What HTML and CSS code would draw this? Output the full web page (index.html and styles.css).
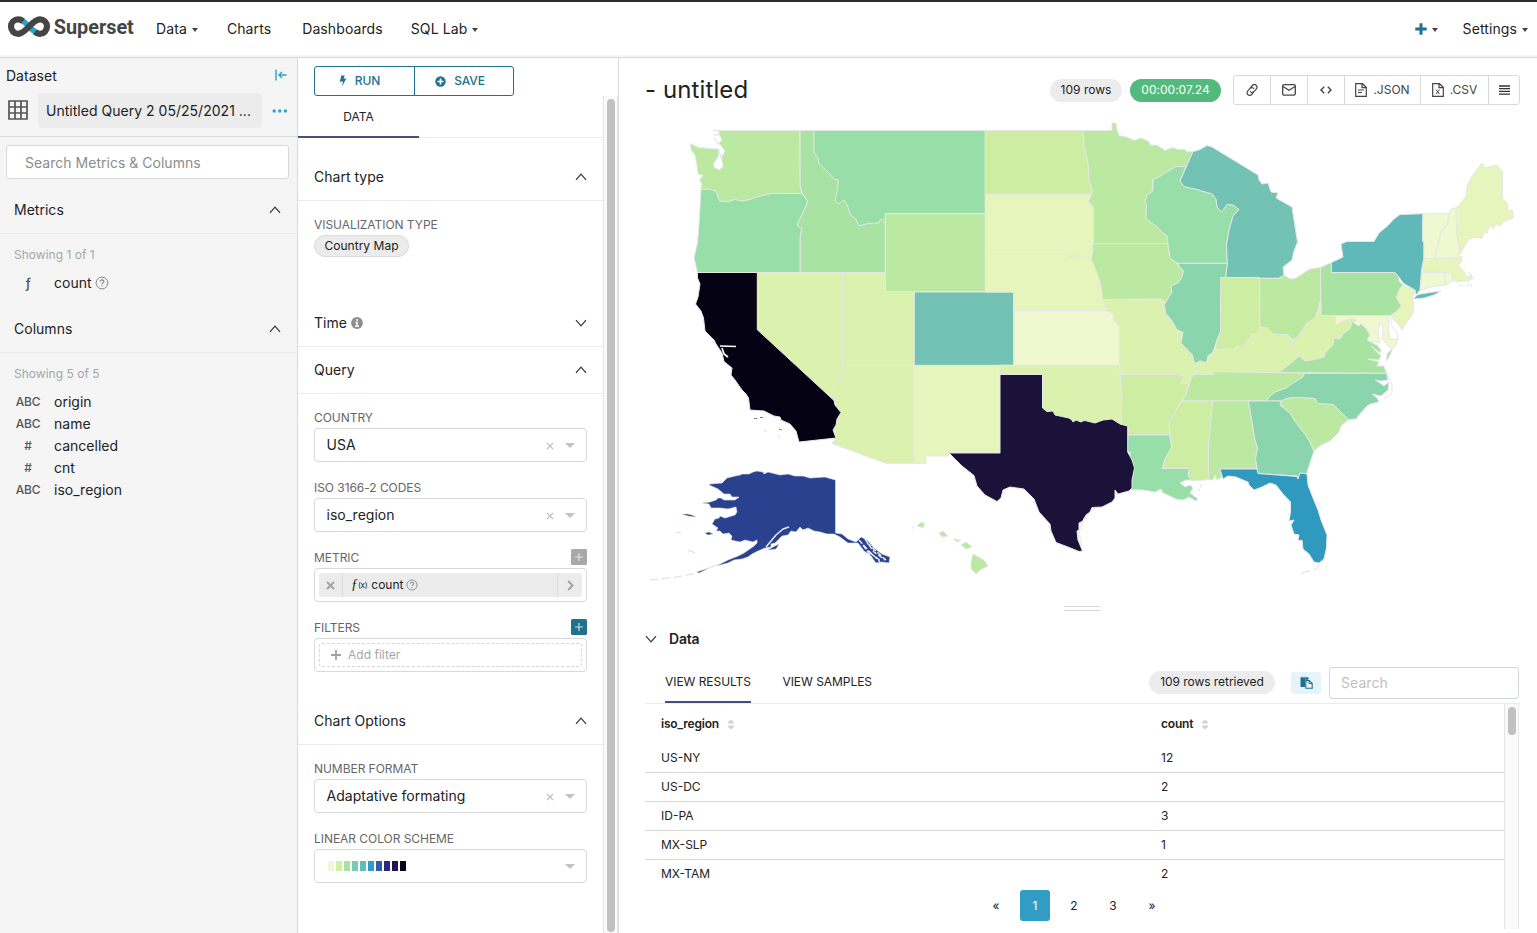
FILE: index.html
```html
<!DOCTYPE html>
<html lang="en">
<head>
<meta charset="utf-8">
<title>Superset</title>
<link rel="stylesheet" href="styles.css">
</head>
<body>
<svg class="defs" width="0" height="0">
  <symbol id="up" viewBox="0 0 12 8"><path d="M1 6.800 6 1.200l5 5.600" fill="none" stroke="#333" stroke-width="1.200"/></symbol>
  <symbol id="down" viewBox="0 0 12 8"><path d="M1 1.200 6 6.800l5-5.600" fill="none" stroke="#333" stroke-width="1.200"/></symbol>
  <symbol id="help" viewBox="0 0 14 14"><circle cx="7" cy="7" r="5.900" fill="none" stroke="#888" stroke-width="1"/><path d="M5.200 5.600c0-2.400 3.700-2.300 3.700-.1C8.900 6.900 7 6.800 7 8.300M7 9.300v1.200" fill="none" stroke="#888" stroke-width="1.200"/></symbol>
  <symbol id="clear" viewBox="0 0 8 8"><path d="m1 1 6 6M7 1 1 7" stroke="#bfbfbf" stroke-width="1.100"/></symbol>
  <symbol id="sort" viewBox="0 0 8 11"><path d="M.8 4.500Q1 2 4 .8 7 2 7.200 4.500zM.8 6.500Q1 9 4 10.200 7 9 7.200 6.500z" fill="#d2d2d2"/></symbol>
</svg>

<header class="nav">
  <svg class="logo" viewBox="0 0 128 26" width="128" height="26">
    <path d="M14.500 4.300C19.500 6.500 24 14 30 17" fill="none" stroke="#20a7c9" stroke-width="5.600"/>
    <path d="M16 5.200C14.300 3.900 12.800 3.400 11.200 3.400a7.200 7.200 0 0 0 0 14.400C19 17.800 25 3.400 32.800 3.400a7.200 7.200 0 0 1 0 14.400c-1.700 0-3.200-.5-4.800-1.700" fill="none" stroke="#454545" stroke-width="6.200"/>
    <text x="46.800" y="17.800" class="wordmark" textLength="80" lengthAdjust="spacingAndGlyphs">Superset</text>
  </svg>
  <nav class="menu">
    <a class="item data">Data<i class="caret"></i></a>
    <a class="item charts">Charts</a>
    <a class="item dash">Dashboards</a>
    <a class="item">SQL Lab<i class="caret"></i></a>
  </nav>
  <div class="menu-right">
    <a class="item new"><svg width="12" height="12" viewBox="0 0 12 12"><path d="M6 .3v11.400M.3 6h11.400" stroke="#20718d" stroke-width="3"/></svg><i class="caret"></i></a>
    <a class="item">Settings<i class="caret"></i></a>
  </div>
</header>

<div class="app">
  <aside class="dataset">
    <div class="ds-title"><span>Dataset</span><svg width="12" height="12" viewBox="0 0 12 12"><path d="M1 .5v11M11.500 6H4M7 3 4 6l3 3" fill="none" stroke="#20a7c9" stroke-width="1.400"/></svg></div>
    <div class="ds-query">
      <svg width="20" height="20" viewBox="0 0 20 20"><path d="M1 1h18v18H1zM7 1v18M13 1v18M1 7h18M1 13h18" fill="none" stroke="#555" stroke-width="1.700"/></svg>
      <div class="ds-name">Untitled Query 2 05/25/2021 ...</div>
      <svg class="more" width="16" height="4" viewBox="0 0 16 4"><g fill="#20a7c9"><circle cx="2.200" cy="2" r="1.700"/><circle cx="7.800" cy="2" r="1.700"/><circle cx="13.400" cy="2" r="1.700"/></g></svg>
    </div>
    <div class="ds-search">Search Metrics &amp; Columns</div>
    <div class="ds-head"><span>Metrics</span><svg width="12" height="8"><use href="#up"/></svg></div>
    <div class="showing">Showing 1 of 1</div>
    <div class="field"><b class="fn">ƒ</b><span>count</span><svg class="q" width="14" height="14"><use href="#help"/></svg></div>
    <div class="ds-head columns"><span>Columns</span><svg width="12" height="8"><use href="#up"/></svg></div>
    <div class="showing">Showing 5 of 5</div>
    <div class="field"><b>ABC</b><span>origin</span></div>
    <div class="field"><b>ABC</b><span>name</span></div>
    <div class="field"><b>#</b><span>cancelled</span></div>
    <div class="field"><b>#</b><span>cnt</span></div>
    <div class="field"><b>ABC</b><span>iso_region</span></div>
  </aside>

  <section class="controls">
    <div class="actions">
      <div class="btn"><svg width="8" height="12" viewBox="0 0 8 12"><path d="M2.300.5h3.400L4.600 3.800 7.300 3.200 3 11.700l1-5.400L.8 7z" fill="#20718d"/></svg>RUN</div>
      <div class="btn save"><svg width="11" height="11" viewBox="0 0 11 11"><circle cx="5.500" cy="5.500" r="5.200" fill="#20718d"/><path d="M5.500 2.500v6M2.500 5.500h6" stroke="#fff" stroke-width="1.700"/></svg>SAVE</div>
    </div>
    <div class="scroller">
      <div class="form">
        <div class="tabs"><div class="tab">DATA</div></div>
        <div class="sec"><span>Chart type</span><svg width="12" height="8"><use href="#up"/></svg></div>
        <div class="group viz">
          <div class="label">VISUALIZATION TYPE</div>
          <div class="chip">Country Map</div>
        </div>
        <div class="sec"><span>Time</span><svg class="info" width="12" height="12" viewBox="0 0 12 12"><circle cx="6" cy="6" r="5.900" fill="#8e8e8e"/><path d="M6 2v1.900M4.500 5.500H6v3.700M4.200 9.200h3.700" fill="none" stroke="#fff" stroke-width="1.500"/></svg><svg width="12" height="8"><use href="#down"/></svg></div>
        <div class="sec"><span>Query</span><svg width="12" height="8"><use href="#up"/></svg></div>
        <div class="group query">
          <div class="label">COUNTRY</div>
          <div class="select"><span>USA</span><svg width="8" height="8"><use href="#clear"/></svg><i class="tri"></i></div>
          <div class="label">ISO 3166-2 CODES</div>
          <div class="select"><span>iso_region</span><svg width="8" height="8"><use href="#clear"/></svg><i class="tri"></i></div>
          <div class="label">METRIC<svg class="add" width="16" height="16" viewBox="0 0 16 16"><rect width="16" height="16" rx="1.500" fill="#a8a8a8"/><path d="M8 4v8M4 8h8" stroke="#e4e4e4" stroke-width="1.200"/></svg></div>
          <div class="box"><div class="metric">
            <div class="m-x"><svg width="9" height="9" viewBox="0 0 9 9"><path d="m1 1 7 7M8 1 1 8" stroke="#a3a3a3" stroke-width="2"/></svg></div>
            <div class="m-name"><em>ƒ</em><small>(x)</small><span>count</span><svg width="12" height="12"><use href="#help"/></svg></div>
            <div class="m-go"><svg width="7" height="11" viewBox="0 0 7 11"><path d="m1.200 1 4.300 4.500L1.200 10" fill="none" stroke="#a3a3a3" stroke-width="2"/></svg></div>
          </div></div>
          <div class="label">FILTERS<svg class="add" width="16" height="16" viewBox="0 0 16 16"><rect width="16" height="16" rx="1.500" fill="#20718d"/><path d="M8 4v8M4 8h8" stroke="#c8dde4" stroke-width="1.200"/></svg></div>
          <div class="box"><div class="add-filter"><svg width="10" height="10" viewBox="0 0 10 10"><path d="M5 0v10M0 5h10" stroke="#a3a3a3" stroke-width="1.800"/></svg>Add filter</div></div>
        </div>
        <div class="sec"><span>Chart Options</span><svg width="12" height="8"><use href="#up"/></svg></div>
        <div class="group">
          <div class="label">NUMBER FORMAT</div>
          <div class="select"><span>Adaptative formating</span><svg width="8" height="8"><use href="#clear"/></svg><i class="tri"></i></div>
          <div class="label">LINEAR COLOR SCHEME</div>
          <div class="select"><div class="ramp"><i class="r0"></i><i class="r1"></i><i class="r2"></i><i class="r3"></i><i class="r4"></i><i class="r5"></i><i class="r6"></i><i class="r7"></i><i class="r8"></i><i class="r9"></i></div><i class="tri"></i></div>
        </div>
      </div>
      <div class="track"><div class="thumb"></div></div>
    </div>
  </section>

  <main class="chart">
    <div class="chart-head">
      <h1>- untitled</h1>
      <div class="badge">109 rows</div>
      <div class="badge timer">00:00:07.24</div>
      <div class="tools">
        <div class="t w37"><svg width="14" height="14" viewBox="0 0 14 14"><g transform="rotate(-50 7 7)" fill="none" stroke="#444" stroke-width="1.200"><path d="M6.500 9.600H3.300a2.600 2.600 0 0 1 0-5.200h3.400a2.600 2.600 0 0 1 2.500 3.300"/><path d="M7.500 4.400h3.200a2.600 2.600 0 0 1 0 5.200H7.300a2.600 2.600 0 0 1-2.500-3.300"/></g></svg></div>
        <div class="t w37"><svg width="14" height="12" viewBox="0 0 14 12"><rect x=".7" y=".7" width="12.600" height="10.400" rx="1.300" fill="none" stroke="#444" stroke-width="1.300"/><path d="m1 2.500 6 3.700 6-3.700" fill="none" stroke="#444" stroke-width="1.300"/></svg></div>
        <div class="t w37"><svg width="12" height="8" viewBox="0 0 12 8"><path d="M4.200.8 1 4l3.200 3.200M7.800.8 11 4 7.800 7.200" fill="none" stroke="#444" stroke-width="1.400"/></svg></div>
        <div class="t w76"><svg width="12" height="14" viewBox="0 0 12 14"><path d="M.7.700h6.800l3.800 3.600v9H.7zM7 .7v4h4" fill="none" stroke="#444" stroke-width="1.200"/><path d="M3 7h6M3 9.500h4" stroke="#444"/></svg>.JSON</div>
        <div class="t w68"><svg width="12" height="14" viewBox="0 0 12 14"><path d="M.7.700h6.800l3.800 3.600v9H.7zM7 .7v4h4" fill="none" stroke="#444" stroke-width="1.200"/><path d="m4 6.500 3.500 4.500M7.500 6.500 4 11" stroke="#444"/></svg>.CSV</div>
        <div class="t"><svg width="11" height="10" viewBox="0 0 11 10"><path d="M0 1h11M0 3.700h11M0 6.400h11M0 9.100h11" stroke="#333" stroke-width="1.300"/></svg></div>
      </div>
    </div>

    <svg class="map" width="875" height="475" viewBox="645 115 875 475">
      <g stroke="#e6e6e6" stroke-width="1" stroke-linejoin="round">
        <path fill="#a9e3a3" d="M800 130.500H840L860 215 885.300 213V272.500H800V238L801.500 229 797 225 806 206 807.500 201 802 193.500 800 186Z"/>
        <path fill="#bce9a2" d="M718.500 130.500H799.700L800 186 802 193.500H771L758 196.700 748 200 741.700 201 735 199.500 728 202 719.500 201 716 191.700 713 190 708 189 700.700 189.700 702 184 699.500 180 703 175 698 174 697 165 695 155 691 150 690.500 143.700 698.500 147.500 711.700 148.700 719 149 718.500 156.500 713.500 163.500 714 167.500 719.500 170 723 166.500 721.500 158 725 151 721.700 146.700 719 143 722 140 720 136Z"/>
        <path fill="none" stroke-width="1.300" d="M713 138 717 141M714 135 720 134M716 140 719 145M713 130.500H719M719 151 722 160"/>
        <path fill="#98dea8" d="M701 189.700 708 189 713 190 716 191.700 719.500 201 728 202 735 199.500 741.700 201 748 200 758 196.700 771 193.500H802L807.500 201 806 206 797 225 801.500 229 800 238V272.500H697.500L696 266 694 258 697.500 243 699 225Z"/>
        <path fill="#98dea8" d="M814 130.500H985.300V213.700H885.300V224L882 219 880 220 879 223 868 223.500 859 226 856 219 851 216 848 207 844 200 839 204 835 201 837 193 838.500 180 834 179 828 172 819 164 818 158 814 152Z"/>
        <path fill="#bce9a2" d="M885.300 213.700h100v78h-100z"/>
        <path fill="#dbf1ae" d="M842.300 365.300H914V463.300H885.700L832 443.500 836 438 833 430 840 412 834 400 833 384Z"/>
        <path fill="#dbf1ae" d="M757.300 272.500H842.300V380L840 383 836 380 833 384 834.500 400.500 757.300 329.700Z"/>
        <path fill="#dbf1ae" d="M842.300 272.500H885.300V291.700H914V365.300H842.300Z"/>
        <path fill="#050213" d="M697.500 272.500H757.300V329.700L834 400.500 835 405 841 412.500 837 419 836 425 833 430 836 438 799 442 796 431 790 424 781 420 780 417 774 416 770 414 764 411 750 410 748.500 398 746 394 742 390 735 380 731 375 732 368 724 361.500 722 353 716 344 714 340 705 331 703.500 318 701 311 695.500 304 698 297 700 284 697.500 278Z"/>
        <path fill="#e5f5bc" d="M914 365.300H1000V452.500H949V456H926V463.300H914Z"/>
        <path fill="#73c3b4" d="M914.300 292h99.400v73.300h-99.400z"/>
        <path fill="#ccedA2" d="M985.300 130.500H1083L1084.500 148 1088 163 1089 179 1092 190 1091.500 194.300H985.300Z"/>
        <path fill="#e5f5bc" d="M985.300 194.300H1091.500L1088.500 202 1093.700 207V243L1092.500 245 1093 251 1091 259 1080 255.500 1070 257 1066 253.500H985.300Z"/>
        <path fill="#e5f5bc" d="M985.300 253.500H1066L1070 257 1080 255.500 1091 259 1095 268 1100 281 1103 299 1108 310.700H1013.700V292H985.300Z"/>
        <path fill="#eff8cf" d="M1014 310.700H1107L1114 314 1113 319 1119.500 327V365.300H1014Z"/>
        <path fill="#dbf1ae" d="M1000 365.300H1119.500V374.500L1122 394V428H1042V375H1000Z"/>
        <path fill="#bce9a2" d="M1083 130.500H1112V122.500L1116 123.500 1117 130 1119 135.500 1128 137.500 1134 140.500 1141 138 1148 141 1151 145.500 1157 145 1165 150.500 1173 147.500 1178 149.500H1185L1187 151.500H1193L1186 166.500H1176L1157 178 1153 179.500V191L1147 195 1145 201 1146.500 204 1146 219 1156 226 1162 232 1167 236 1168 243.500H1093.700V207L1088.500 202 1091.500 194.300 1092 190 1089 179 1088 163 1084.500 148Z"/>
        <path fill="#bce9a2" d="M1092.500 243.500H1168L1170 258 1176 263 1183.500 271 1182 277 1178 283 1171 286 1172 292 1169 297 1165 302 1161 299 1103 299.500 1100 281 1095 268 1091 259 1093 251Z"/>
        <path fill="#dbf1ae" d="M1103 299.500 1161 299 1165 302 1165 313 1173 322 1177 331 1183 332 1181 343 1192.500 355 1196 365 1197 370 1191 378 1188.500 383.500H1180L1184 377 1180 374.300H1120L1119.500 327 1113 319 1114 314 1108 310.700Z"/>
        <path fill="#98dea8" d="M1176 166.500H1186L1180 181 1184 186.500 1197 189.500 1212 194 1216 199 1217 207 1221.500 212 1227 204.500 1233 205 1239 209.500 1233 216 1229 230 1226.500 245 1227.300 263.300H1177L1170 258 1167 236 1162 232 1156 226 1146 219 1146.500 204 1145 201 1147 195 1153 191V179.500L1157 178Z"/>
        <path fill="#73c3b4" d="M1193 151.500 1199 150 1207 145.500 1212 147 1258 175 1259 180 1262 184 1268 183 1271 192 1278 193 1276 198 1292 207 1297.500 242 1294 251 1292 260 1283 267 1284 275 1279 278.200H1225.500L1227.300 263 1226.500 245 1229 230 1233 216 1239 209.500 1233 205 1227 204.500 1221.500 212 1217 207 1216 199 1212 194 1197 189.500 1184 186.500 1180 181Z"/>
        <path fill="#8ad5ac" d="M1177 263.300H1227.300L1225.500 277.500H1221L1220.500 332 1217 340 1213 352 1208 356 1206.500 363 1200 361 1195 364 1192.500 355 1181 343 1183 332 1177 330 1173 322 1165.500 313 1164.500 304 1169 297 1172 292 1171 286 1178 283 1182 277 1183.500 271Z"/>
        <path fill="#ccedA2" d="M1221 277.500H1259.700V333L1252 334 1247 342 1241 348 1237 345 1232 350H1222L1215 349 1217 340 1220.500 332Z"/>
        <path fill="#bce9a2" d="M1259.700 278.500H1279L1284 275 1290 279 1295 278.500 1310 269 1320.500 267.500V300L1318 310 1315 318 1307 323 1301 332 1297 338 1292 340 1288 335 1281 335 1273 334 1267 328 1260 327Z"/>
        <path fill="#dbf1ae" d="M1195 364 1200 361 1206.500 363 1208 358 1213 352 1215 349 1222 350 1226 348 1232 350 1237 345 1241 348 1247 342 1252 334 1259 333 1260 327 1267 328 1273 334 1281 335 1288 335 1292 340 1293 347 1299 356 1290 364 1282 370 1277 372.500 1214 371.700 1213.500 374.300H1193L1197 371Z"/>
        <path fill="#a9e3a3" d="M1320.500 267.500 1331.500 262.500V272.500H1395L1399 277V281L1403 285 1399 290 1396.500 298 1401.500 306 1396 312 1390 315.500H1321Z"/>
        <path fill="#5fb9b9" d="M1331.500 272.500V262.500L1343 257 1341 244 1347 241.500H1374L1379 233 1388 225.500 1394 219 1400 214.500 1423 213.700 1422.500 240 1424 243 1424 258 1421.500 270 1420 290 1416 295 1415 290 1403 283 1399 277 1395 272.500Z"/>
        <path fill="#5fb9b9" d="M1413 299 1418 294.500 1430 292.500 1441 291 1434 295 1424 298Z"/>
        <path fill="#e5f5bc" d="M1403 285 1415 290.500 1412 300 1414 302 1413 313 1407 322 1402 330 1399 325 1393 319 1391 315 1396 312 1401.500 306 1396.500 298 1399 290Z"/>
        <path fill="#eff8cf" d="M1423 213.700H1449L1447.500 225 1441 232 1438 245 1434.500 258.500H1424V243L1422.500 240Z"/>
        <path fill="#eff8cf" d="M1449 213.700 1451 209 1456 208 1457 235 1460 254 1457 258 1434.500 258.500 1438 245 1441 232 1447.500 225Z"/>
        <path fill="#e5f5bc" d="M1456 208 1461 203 1466 196 1467 187 1471 178 1482 163 1485 168 1496 165 1502.500 171V199L1507.500 203 1508 210 1513 211 1513 218 1505 221 1500 226 1496 224 1493 229 1490 225 1487 233 1484 232 1482 238 1476 237 1469 239 1464 247 1460 254 1457 235Z"/>
        <path fill="#e5f5bc" d="M1424 258.500H1457L1461 256 1462 260 1458 266 1464 271 1466 276 1471 278 1469 272 1473 278 1468 281 1460 281 1456 282 1452 277 1450 272.500 1422 271.500Z"/>
        <path fill="#eff8cf" d="M1422 272.500H1445V285L1430 287 1420 291Z"/>
        <path fill="#eff8cf" d="M1445 272.500H1451L1453 281 1445 285Z"/>
        <path fill="#dbf1ae" d="M1320.500 300 1321 315.500H1335.500V325L1343 321 1353 318 1359 320 1352 323 1350 329 1343 334 1340 339 1334 338 1333 345 1326 352 1324 357 1312 360 1305 361 1299 356 1293 347 1292 340 1297 338 1301 332 1307 323 1315 318 1318 310Z"/>
        <path fill="#eff8cf" d="M1335.500 315.500H1388L1389.500 339H1398L1396 345 1393 348 1387 345 1382 338 1383 328 1380 322 1378 330 1380 343 1372 341 1367 336 1368 331 1364 325 1358 323 1353 318 1343 321 1335.500 325Z"/>
        <path fill="#fff" d="M1388 315.500 1391 316 1391 325 1397 333 1398 339H1389.500Z"/>
        <path fill="#a9e3a3" d="M1277 372.500 1282 370 1290 364 1299 356 1305 361 1312 360 1324 357 1326 352 1333 345 1334 338 1340 339 1343 334 1350 329 1352 321.500 1359 326 1361 324 1367 330 1370 335 1367 340 1377 345 1381 350 1380 353 1371 346 1381 356 1379 360 1368 359 1379 362 1377 366 1384 366 1386.500 373.300Z"/>
        <path fill="#a9e3a3" d="M1393 347.500 1390 355 1386.500 361 1387 354Z"/>
        <path fill="#bce9a2" d="M1193 374.300H1213.500L1214 371.700 1304.500 373 1303 377 1293 383 1286 388 1275 392 1269 397 1266.500 401H1182L1186 394 1190 382Z"/>
        <path fill="#8ad5ac" d="M1304.500 373.300H1386.500L1388 380 1381 381 1375 380 1380 383 1384 386 1389 382 1388 390 1381 396 1372 394 1377 398 1379 402 1370 404 1366 407 1359 415 1356 419 1348.500 419.500 1333 404.500H1318L1315 398.500 1296 397.500 1287 398.500 1281 401H1266.500L1269 397 1275 392 1286 388 1293 383 1303 377Z"/>
        <path fill="none" d="M1387 373 1392 385 1392 393 1384 399"/>
        <path fill="#ccedA2" d="M1120 374.500H1180L1184 377 1180 383.500H1188.500L1185 397 1180 403 1172 417 1169 424 1170 435H1128V427L1121.500 424 1122 394Z"/>
        <path fill="#ccedA2" d="M1182 401H1212.700L1208.500 445 1208.500 479.500 1192 481 1188 475 1189 468.500H1162L1165 459 1171.500 447 1169 424 1172 417 1180 404Z"/>
        <path fill="#bce9a2" d="M1212.700 401H1248.500L1255 440 1257.500 448 1255.500 459 1257 469H1220L1222 477 1217 480 1215 475 1213 480 1208.500 479.500V445Z"/>
        <path fill="#98dea8" d="M1128 435H1169.500L1171.500 447 1165 459 1162 468.500H1189L1188 475 1191 480 1186 480 1180 483 1185 487 1190 485 1193 488 1190 493 1198 499 1196 501 1189 497 1183 500 1176 499 1170 496 1163 493 1161 489 1155 492 1143 490 1130 489.500 1130 452 1127 452Z"/>
        <path fill="#8ad5ac" d="M1248.500 401H1281L1280 405 1290 413 1297 424 1305 434 1309 440 1314 451 1311 460 1307 472V474L1300 473 1298 479 1297 476 1258 473.500 1255.500 459 1257.500 448 1255 440Z"/>
        <path fill="#bce9a2" d="M1280 404 1281 401 1287 398.500 1296 397.500 1315 398.500 1318 403.500 1333 404.500 1348.500 419.500 1341 426 1339 432 1330 441 1321 445 1314 451 1309 440 1305 434 1297 424 1290 413Z"/>
        <path fill="#3099c0" d="M1220 469H1257L1258 473.500 1297 476.500 1298 479 1300 473 1307 474 1308 485 1313 498 1318 510 1321 520 1327 535 1326.500 548 1324 559 1319 563 1314 562 1309 554 1303 549 1302 540 1298 541 1299 535 1294 534 1291 525 1294 520 1289 521 1290.500 512V502L1283 494 1276 485 1270 483 1262 487 1254 490 1249 485 1248 482 1243 480 1236 477 1228 476 1223 479Z"/>
        <path fill="#1b123a" d="M1000 374.500H1042.500V408L1047 411.500 1053 411 1055 415 1069 418 1072 420 1073 422 1076 420 1081 422 1084 420.500 1087 421 1095 423 1103 420 1112 419 1120 424 1127.700 426V452L1132 460 1134.500 468 1132 480 1132 488 1129 491 1118 494 1115 490 1115 498 1112 502 1102 507 1092 507.500 1090 512 1086 515 1083 521 1079 523 1079 530 1077 531 1078 540 1082.500 551 1079 551.500 1068 547 1056 542.500 1051 531 1050 524 1039 512 1034 499 1024 489 1010 487 1003 490 1001 498 997 501.500 985 495 977 486 974 475.500 962 466 949 453H1000Z"/>
        <path fill="#29418f" stroke-width=".6" d="M835.500 480V533L842 534 848 539 856 542 861 537 867 540 874 548 882 554 890 557 889 563 882 562 876 563 870 555 864 551 858 543 848 543 840 537 834 534 827 534 820 532 814 531 808 528 803 530 800 527 796 532 791 531 788 535 782 536 780 538 775 543 771 544 771 547 765 548 758 551 752 554 748 557 742 559 734 560 728 563 716 566 728 560 738 556 744 553 754 546 757 543 757 540 753 542 745 540 740 542 735 541 731 540 732 536 729 533 723 534 720 531 716 531 718 528 712 524 715 519 719 518 720 516 725 518 735 515 737 512 736 507 728 509 720 508 711 508 709 504 702 503 710 502 716 500 718 498 721 498 724 500 735 500 739 497 732 497 730 494 724 494 718 489 709 485 710 484 722 483 727 478 735 476 740 475 742 474 749 474 753 472 757 471 763 472 764 474 768 472 780 475 788 474 795 476 803 476 810 478 825 477Z"/>
        <path fill="none" stroke="#fff" stroke-width="1.700" d="M720 346 736 346.500M722 348 724 354 728 357"/>
        <path fill="none" stroke="#eee" stroke-width="1.500" d="M1082 548 1079 532 1084 519 1094 509M766 547 771 541 776 535 783 529 789 527M797 531 808 530"/>
        <path fill="none" stroke="#eee" stroke-width="1.400" stroke-dasharray="5 2" d="M859 540 868 550 880 562M865 539 874 552 885 560M863 545 872 558M867 543 886 560M870 553 881 561"/>
        <path fill="none" stroke="#ddd" stroke-dasharray="8 4" d="M650 580 677 577 697 573 716 565M1302 573 1316 569 1324 560M676 532 681 533M688 550 695 553"/>
        <path fill="#29418f" stroke="#ddd" stroke-width=".4" d="M682 514h5l5 1 4 2-8-1zM705 533l4-1 4 2-5 1zM768 550l5-3 6-3-3 5zM697 572l12-4-10 5z"/>
        <path fill="#bce9a2" stroke-width=".8" d="M917 526 921 522 925 524 923 528ZM939 533 943 531 948 536 942 537ZM953 539 961 540 957 542ZM961 545 966 542 972 547 966 549ZM973 554 984 560 988 566 980 570 976 574 971 569 971 562Z"/>
        <path fill="none" stroke="#777" stroke-dasharray="3 3" d="M754 418.500h4M760 417.500h3M779 429l3 1"/>
        <path fill="none" d="M763 431h4M778 435l3 4M912 529l2-3"/>
        <path fill="none" d="M1459 285 1463 286M1467 286 1471 284 1472 287M1317 502 1321 510M1198 492 1202 484"/>
      </g>
    </svg>

    <div class="handle"></div>
    <div class="data-title"><svg width="12" height="8"><use href="#down"/></svg><span>Data</span></div>
    <div class="result-tabs">
      <div class="rt active">VIEW RESULTS</div>
      <div class="rt">VIEW SAMPLES</div>
      <div class="badge retrieved">109 rows retrieved</div>
      <div class="copy"><svg width="13" height="13" viewBox="0 0 13 13"><path d="M.5 1.200h8v2.600H5v7.200H.5z" fill="#20718d"/><path d="M3 .6h3v1.200H3z" fill="#7fb0c0"/><path d="M5.800 4.600h3.500l2.900 2.800v4.800H5.800z" fill="#e9f6f9" stroke="#20718d" stroke-width="1.100"/><path d="M9.100 4.800v2.800h3" fill="none" stroke="#20718d"/></svg></div>
      <div class="r-search">Search</div>
    </div>
    <div class="results">
      <div class="table-area">
        <div class="tr th"><span>iso_region<svg width="8" height="11"><use href="#sort"/></svg></span><span>count<svg width="8" height="11"><use href="#sort"/></svg></span></div>
        <div class="tr"><span>US-NY</span><span>12</span></div>
        <div class="tr"><span>US-DC</span><span>2</span></div>
        <div class="tr"><span>ID-PA</span><span>3</span></div>
        <div class="tr"><span>MX-SLP</span><span>1</span></div>
        <div class="tr last"><span>MX-TAM</span><span>2</span></div>
        <div class="pages"><a>«</a><a class="on">1</a><a>2</a><a>3</a><a>»</a></div>
      </div>
      <div class="track"><div class="thumb"></div></div>
    </div>
  </main>
</div>
</body>
</html>
```
FILE: styles.css
```css
* { box-sizing: border-box; }
body { margin: 0; width: 1537px; height: 933px; overflow: hidden; background: #fff; color: #222; font: 14px/20px Inter, "Liberation Sans", sans-serif; letter-spacing: .02px; }
svg { flex: none; display: block; }
.defs { position: absolute; }

.nav { height: 58px; border-top: 2px solid #2b2a2f; border-bottom: 1px solid #d9d9d9; box-shadow: inset 0 -2px #f5f5f5; display: flex; align-items: center; padding: 0 9px 2px 7px; }
.logo { margin-right: 21px; }
.wordmark { font: 700 20px Roboto, sans-serif; fill: #454545; letter-spacing: 0; }
.menu, .menu-right { display: flex; }
.menu-right { margin-left: auto; }
.item { display: flex; align-items: center; margin-right: 29px; letter-spacing: .1px; }
.item.charts { margin-right: 31px; }
.item.dash { margin-right: 28px; }
.menu-right .item:last-child { margin-right: 0; }
.menu-right .new { margin-right: 25px; }
.caret { width: 0; height: 0; border: 3px solid transparent; border-top: 4px solid #444; border-bottom: 0; margin: 3px 0 0 5px; }

.app { display: flex; height: 875px; }
.dataset { width: 298px; background: #f5f5f5; border-right: 1px solid #d9d9d9; flex: none; }
.ds-title { display: flex; justify-content: space-between; align-items: center; height: 35px; padding: 1px 10px 0 6px; }
.ds-title svg { margin-top: -2px; }
.ds-query { display: flex; align-items: center; height: 44px; border-bottom: 1px solid #d9d9d9; padding: 0 9px 9px 8px; }
.ds-name { width: 224px; height: 35px; line-height: 36px; margin: 0 10px; padding-left: 8px; background: #ececec; border-radius: 4px; white-space: nowrap; }
.more { margin-top: 2px; }
.ds-search { margin: 8px 8px 0 6px; height: 34px; border: 1px solid #d9d9d9; border-radius: 3px; background: #fff; color: #8c8c8c; line-height: 34px; padding-left: 18px; }
.ds-head { display: flex; align-items: center; justify-content: space-between; height: 47px; margin-top: 8px; padding: 0 16px 0 14px; border-bottom: 1px solid #ebebeb; }
.ds-head.columns { margin-top: 12px; }
.showing { height: 38px; padding: 11px 14px 0; font-size: 12px; color: #a6a6a6; }
.field { display: flex; align-items: center; height: 22px; }
.field b { width: 56px; margin-right: -2px; text-align: center; font-size: 12px; font-weight: 500; letter-spacing: -.2px; color: #555; }
.field .fn { font-size: 14px; }
.field .q { margin-left: 3px; }

.controls { width: 321px; flex: none; border-right: 1px solid #d9d9d9; padding-top: 8px; }
.actions { width: 200px; height: 30px; margin-left: 16px; display: flex; border: 1px solid #20718d; border-radius: 3px; color: #20718d; font-size: 12px; font-weight: 500; letter-spacing: -.1px; }
.btn { width: 100px; display: flex; align-items: center; justify-content: center; gap: 8px; padding-right: 10px; }
.save { border-left: 1px solid #20718d; padding-right: 8px; }
.scroller { display: flex; height: 837px; }
.form { width: 305px; }
.track { width: 15px; background: #fafafa; border-left: 1px solid #e4e4e4; border-right: 1px solid #e8e8e8; display: flex; justify-content: center; padding-top: 3px; }
.thumb { width: 8px; height: 833px; border-radius: 4px; background: #c1c1c1; }
.tabs { height: 42px; border-bottom: 1px solid #ebebeb; margin-bottom: 16px; }
.tab { width: 121px; height: 42px; border-bottom: 2px solid #454e7c; text-align: center; font-size: 12px; line-height: 42px; letter-spacing: 0; }
.sec { display: flex; align-items: center; height: 47px; border-bottom: 1px solid #ebebeb; padding: 0 16px; }
.sec svg:last-child { margin-left: auto; }
.info { margin-left: 4px; }
.group { padding: 14px 16px 0; }
.viz { height: 99px; }
.query { height: 304px; }
.label { display: flex; align-items: center; justify-content: space-between; height: 20px; font-size: 12px; color: #666; letter-spacing: -.05px; }
.add { margin-top: -3px; }
.chip { width: 95px; height: 22px; line-height: 20px; border: 1px solid #d9d9d9; border-radius: 11px; background: #ececec; text-align: center; font-size: 12px; }
.select, .box { width: 273px; height: 34px; margin-bottom: 16px; border: 1px solid #d9d9d9; border-radius: 4px; }
.select { display: flex; align-items: center; padding: 0 11px 0 11.500px; }
.select svg { margin: 2px 11px 0 auto; }
.tri { border: 5px solid transparent; border-top: 5px solid #c2c2c2; border-bottom: 0; margin-left: auto; }
.select svg + .tri { margin-left: 0; }
.box { padding: 4px; }
.metric { display: flex; height: 24px; background: #ececec; border-radius: 2px; font-size: 12px; letter-spacing: 0; }
.m-x { width: 24px; border-right: 1px solid #dcdcdc; display: grid; place-items: center; }
.m-name { flex: 1; display: flex; align-items: center; padding-left: 8px; }
.m-name em { font: italic 14px "Liberation Serif", serif; }
.m-name small { font-size: 8px; letter-spacing: -.3px; margin-right: 4px; }
.m-name svg { margin-left: 3px; }
.m-go { width: 25px; border-left: 1px solid #dcdcdc; display: grid; place-items: center; }
.add-filter { display: flex; align-items: center; gap: 7px; height: 24px; border: 1px dashed #d6d6d6; border-radius: 3px; padding-left: 11px; color: #a6a6a6; font-size: 12px; }
.ramp { display: flex; gap: 2px; padding-left: 1px; }
.ramp i { width: 6px; height: 10px; }
.r0 { background: #eff8cf; } .r1 { background: #cff09e; } .r2 { background: #a8e3a4; } .r3 { background: #7bcbb0; } .r4 { background: #63bcb9; }
.r5 { background: #329dc4; } .r6 { background: #305fa5; } .r7 { background: #2a297e; } .r8 { background: #251353; } .r9 { background: #070214; }

.chart { flex: 1; padding: 0 17px 0 26px; }
.chart-head { display: flex; align-items: center; height: 57px; padding-top: 7px; }
h1 { margin: 0 auto 0 0; font-size: 24px; font-weight: 400; line-height: 30px; letter-spacing: .1px; }
.badge { width: 72px; height: 23px; line-height: 22px; margin-right: 8px; border-radius: 12px; background: #ececec; text-align: center; font-size: 12px; }
.timer { width: 91px; margin-right: 12px; background: #54b97f; color: #fff; }
.tools { width: 287px; height: 30px; display: flex; border: 1px solid #d9d9d9; border-radius: 3px; font-size: 12px; color: #444; }
.t { flex: 1; display: flex; align-items: center; justify-content: center; gap: 6px; border-right: 1px solid #d9d9d9; letter-spacing: 0; }
.t:last-child { border: 0; }
.w37 { flex: 0 0 37px; } .w76 { flex: 0 0 76px; } .w68 { flex: 0 0 68px; }
.handle { width: 36px; height: 5px; margin: 16px 0 0 419px; border: 1px solid #d6d6d6; border-width: 1px 0; }
.data-title { display: flex; align-items: center; gap: 12px; height: 56px; font-weight: 600; letter-spacing: -.2px; }
.result-tabs { display: flex; align-items: center; height: 37px; border-bottom: 1px solid #ebebeb; padding: 0 1px 5px 20px; font-size: 12px; letter-spacing: -.05px; }
.rt { height: 42px; line-height: 42px; margin-right: 32px; margin-bottom: -5px; align-self: flex-end; white-space: nowrap; border-bottom: 2px solid transparent; }
.rt.active { border-color: #454e7c; margin-right: 31.500px; }
.retrieved { width: 126px; margin: 0 16px 0 auto; }
.copy { width: 30px; height: 22px; background: #e4f4f8; border-radius: 3px; display: grid; place-items: center; margin-right: 8px; }
.r-search { width: 190px; height: 32px; border: 1px solid #d2d5e0; border-radius: 3px; line-height: 30px; padding-left: 11px; color: #bfbfbf; font-size: 14px; letter-spacing: .05px; }
.results { display: flex; height: 225px; padding-right: 1px; }
.results .thumb { height: 28px; }
.table-area { width: 859px; font-size: 12px; flex: none; }
.tr { display: grid; grid-template-columns: 500px 1fr; height: 29px; line-height: 28px; padding-left: 16px; border-bottom: 1px solid #d9d9d9; letter-spacing: 0; }
.tr span { display: flex; align-items: center; gap: 8px; }
.tr.th { height: 40px; border: 0; font-weight: 600; letter-spacing: -.2px; }
.tr.last { border-color: transparent; }
.pages { display: flex; gap: 9px; margin: 1px 0 0 336px; }
.pages a { width: 30px; height: 31px; line-height: 31px; text-align: center; border-radius: 3px; }
.pages .on { background: #329dc4; color: #fff; }
```
